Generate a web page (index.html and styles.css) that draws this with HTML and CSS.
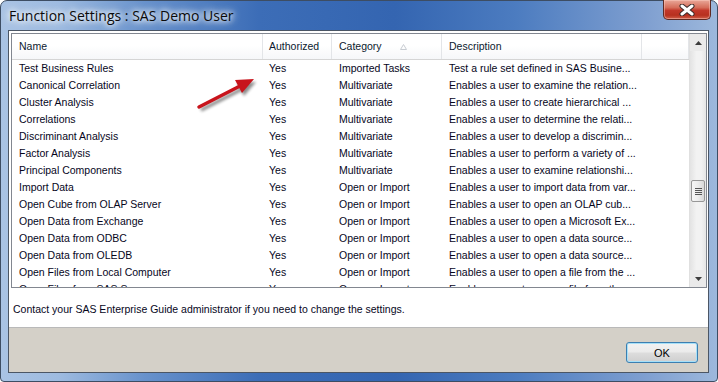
FILE: index.html
```html
<!DOCTYPE html>
<html lang="en">
<head>
  <meta charset="UTF-8">
  <title>Function Settings : SAS Demo User</title>
  <link rel="stylesheet" href="styles.css">
</head>
<body>

  <div class="window">
    <div class="titlebar">
      <span class="title">Function Settings : SAS Demo User</span>
      <button class="close" title="Close">
        <svg width="16" height="12" viewBox="0 0 16 12">
          <path d="M3 2 L13 10 M13 2 L3 10" stroke="#3b2a28" stroke-width="5" stroke-linecap="round"/>
          <path d="M3 2 L13 10 M13 2 L3 10" stroke="#fff" stroke-width="3" stroke-linecap="round"/>
        </svg>
      </button>
    </div>

    <div class="client">
      <div class="panel">
        <div class="listview">
          <div class="list-main">
            <div class="list-head">
              <div class="col c-name">Name</div>
              <div class="col c-auth">Authorized</div>
              <div class="col c-cat">Category
                <svg class="sort" width="7" height="6" viewBox="0 0 7 6"><path d="M0.5 5.5 L3.5 0.5 L6.5 5.5 Z" fill="none" stroke="#c8ccd2"/></svg>
              </div>
              <div class="col c-desc">Description</div>
              <div class="col c-fill"></div>
            </div>
            <div class="list-body">
              <div class="row"><div class="c-name">Test Business Rules</div><div class="c-auth">Yes</div><div class="c-cat">Imported Tasks</div><div class="c-desc">Test a rule set defined in SAS Busine...</div></div>
              <div class="row"><div class="c-name">Canonical Correlation</div><div class="c-auth">Yes</div><div class="c-cat">Multivariate</div><div class="c-desc">Enables a user to examine the relation...</div></div>
              <div class="row"><div class="c-name">Cluster Analysis</div><div class="c-auth">Yes</div><div class="c-cat">Multivariate</div><div class="c-desc">Enables a user to create hierarchical ...</div></div>
              <div class="row"><div class="c-name">Correlations</div><div class="c-auth">Yes</div><div class="c-cat">Multivariate</div><div class="c-desc">Enables a user to determine the relati...</div></div>
              <div class="row"><div class="c-name">Discriminant Analysis</div><div class="c-auth">Yes</div><div class="c-cat">Multivariate</div><div class="c-desc">Enables a user to develop a discrimin...</div></div>
              <div class="row"><div class="c-name">Factor Analysis</div><div class="c-auth">Yes</div><div class="c-cat">Multivariate</div><div class="c-desc">Enables a user to perform a variety of ...</div></div>
              <div class="row"><div class="c-name">Principal Components</div><div class="c-auth">Yes</div><div class="c-cat">Multivariate</div><div class="c-desc">Enables a user to examine relationshi...</div></div>
              <div class="row"><div class="c-name">Import Data</div><div class="c-auth">Yes</div><div class="c-cat">Open or Import</div><div class="c-desc">Enables a user to import data from var...</div></div>
              <div class="row"><div class="c-name">Open Cube from OLAP Server</div><div class="c-auth">Yes</div><div class="c-cat">Open or Import</div><div class="c-desc">Enables a user to open an OLAP cub...</div></div>
              <div class="row"><div class="c-name">Open Data from Exchange</div><div class="c-auth">Yes</div><div class="c-cat">Open or Import</div><div class="c-desc">Enables a user to open a Microsoft Ex...</div></div>
              <div class="row"><div class="c-name">Open Data from ODBC</div><div class="c-auth">Yes</div><div class="c-cat">Open or Import</div><div class="c-desc">Enables a user to open a data source...</div></div>
              <div class="row"><div class="c-name">Open Data from OLEDB</div><div class="c-auth">Yes</div><div class="c-cat">Open or Import</div><div class="c-desc">Enables a user to open a data source...</div></div>
              <div class="row"><div class="c-name">Open Files from Local Computer</div><div class="c-auth">Yes</div><div class="c-cat">Open or Import</div><div class="c-desc">Enables a user to open a file from the ...</div></div>
              <div class="row"><div class="c-name">Open Files from SAS Servers</div><div class="c-auth">Yes</div><div class="c-cat">Open or Import</div><div class="c-desc">Enables a user to open a file from the ...</div></div>
            </div>
          </div>
          <div class="scrollbar">
            <div class="sb-btn">
              <svg width="7" height="4" viewBox="0 0 7 4"><path d="M0 4 L3.5 0 L7 4 Z" fill="#3c3c3c"/></svg>
            </div>
            <div class="sb-track">
              <div class="sb-thumb">
                <svg width="7" height="7" viewBox="0 0 7 7"><path d="M0 0.5 H7 M0 2.5 H7 M0 4.5 H7 M0 6.5 H7" stroke="#555" stroke-width="1"/></svg>
              </div>
            </div>
            <div class="sb-btn">
              <svg width="7" height="4" viewBox="0 0 7 4"><path d="M0 0 L3.5 4 L7 0 Z" fill="#3c3c3c"/></svg>
            </div>
          </div>
        </div>
        <p class="note">Contact your SAS Enterprise Guide administrator if you need to change the settings.</p>
      </div>
      <div class="actions">
        <button class="ok">OK</button>
      </div>
    </div>

    <!-- red annotation arrow drawn over the list -->
    <svg class="pointer" width="80" height="50" viewBox="185 68 80 50">
      <defs>
        <filter id="soft" x="-30%" y="-30%" width="160%" height="160%">
          <feGaussianBlur stdDeviation="1.6"/>
        </filter>
      </defs>
      <g transform="translate(2 3)" opacity="0.45" filter="url(#soft)">
        <path d="M199 107 L240 86" stroke="#000" stroke-width="3.5"/>
        <path d="M254 79 L235 80 L242 93 Z" fill="#000"/>
      </g>
      <path d="M199 107 L240 86" stroke="#c8141c" stroke-width="3.5" stroke-linecap="round"/>
      <path d="M254 79 L235 80 L242 93 Z" fill="#c8141c"/>
    </svg>
  </div>

</body>
</html>
```

FILE: styles.css
```css
body {
  margin: 0;
  background-color: #fff;
  overflow: hidden;
}

.window {
  position: relative;
  width: 718px;
  height: 382px;
  box-sizing: border-box;
  padding: 0 8px 8px 7px;
  display: flex;
  flex-direction: column;
  border-radius: 7px 7px 4px 4px;
  border: 1px solid #3d4d63;
  background: linear-gradient(90deg, #a9c3e4 0%, #9ebbe0 8%, #6892cc 20%, #3c6db7 36%, #3465b1 55%, #4c7cc0 72%, #7f9fd0 90%, #9db8dc 100%);
  font-family: "Liberation Sans", Arial, sans-serif;
}

.titlebar {
  height: 30px;
  margin-top: -1px;
  display: flex;
  justify-content: space-between;
  align-items: flex-start;
}

.title {
  margin: 6px 0 0 1px;
  padding: 0 10px 0 0;
  font-family: "Open Sans", "Noto Sans", sans-serif;
  font-size: 14px;
  line-height: 20px;
  color: #0a0a0a;
  text-shadow: 0 0 10px #fff, 0 0 8px #fff, 0 0 5px #eef4fb;
}

.close {
  width: 48px;
  height: 20px;
  margin-right: -2px;
  padding: 0;
  border: 1px solid #5e2a24;
  border-top: none;
  border-radius: 0 0 5px 5px;
  background: linear-gradient(180deg, #e9a899 0%, #d56d5a 40%, #c2382a 55%, #b7301f 80%, #d0604a 100%);
  box-shadow: inset 0 0 0 1px rgba(255, 210, 200, 0.45);
  display: flex;
  align-items: center;
  justify-content: center;
}

.client {
  flex: 1;
  display: flex;
  flex-direction: column;
  border: 1px solid #4b5665;
  background-color: #d4d0c8;
}

.panel {
  background-color: #fff;
  padding: 2px 1px 0 2px;
  border-bottom: 1px solid #b9b9b9;
}

.listview {
  height: 253px;
  display: flex;
  border: 1px solid #828790;
  overflow: hidden;
}

.list-main {
  flex: 1;
  overflow: hidden;
}

.list-head {
  height: 25px;
  display: flex;
  border-bottom: 1px solid #d5d5d5;
  background: linear-gradient(180deg, #fff 0%, #fff 45%, #f6f7f9 100%);
}

.list-head .col {
  box-sizing: border-box;
  border-right: 1px solid #e3e5e8;
  line-height: 25px;
  font-size: 10.5px;
  color: #0c1a2e;
  position: relative;
}

.list-head .c-fill {
  flex: 1;
}

.sort {
  position: absolute;
  left: 68px;
  top: 10px;
}

.c-name {
  width: 251px;
  padding-left: 7px;
}

.c-auth {
  width: 69px;
  padding-left: 6px;
}

.c-cat {
  width: 110px;
  padding-left: 7px;
}

.c-desc {
  width: 200px;
  padding-left: 7px;
}

.list-body {
  height: 227px;
  overflow: hidden;
}

.row {
  display: flex;
  height: 17px;
  line-height: 17px;
  font-size: 10.5px;
  color: #06061c;
}

.row div {
  box-sizing: border-box;
  white-space: nowrap;
  overflow: hidden;
  flex-shrink: 0;
}

.scrollbar {
  width: 17px;
  display: flex;
  flex-direction: column;
  background-color: #eaeaea;
  border-left: 1px solid #e0e0e0;
  box-sizing: border-box;
}

.sb-btn {
  height: 17px;
  display: flex;
  align-items: center;
  justify-content: center;
}

.sb-track {
  flex: 1;
  padding-top: 129px;
  background: linear-gradient(90deg, #e3e3e3, #f2f2f2 40%, #f2f2f2 70%, #e6e6e6);
}

.sb-thumb {
  height: 22px;
  margin: 0 0 0 1px;
  width: 14px;
  box-sizing: border-box;
  border: 1px solid #979797;
  border-radius: 2px;
  background: linear-gradient(90deg, #f6f6f6, #ececec 50%, #d8d8d8);
  display: flex;
  align-items: center;
  justify-content: center;
}

.note {
  margin: 0;
  height: 39px;
  box-sizing: border-box;
  padding: 14px 0 0 2px;
  line-height: 14px;
  font-size: 10.5px;
  color: #06061c;
}

.actions {
  flex: 1;
  display: flex;
  justify-content: flex-end;
  align-items: flex-start;
  padding: 14px 10px 0 0;
}

.ok {
  width: 72px;
  height: 21px;
  padding: 0;
  border: 1px solid #3c7fb1;
  border-radius: 3px;
  background: linear-gradient(180deg, #f2f2f2 0%, #ebebeb 48%, #dddddd 52%, #cfcfcf 100%);
  box-shadow: inset 0 0 0 1px #a6e0f8;
  font-family: "Liberation Sans", Arial, sans-serif;
  font-size: 11px;
  color: #000;
}

.pointer {
  position: absolute;
  left: 184px;
  top: 67px;
}
```
